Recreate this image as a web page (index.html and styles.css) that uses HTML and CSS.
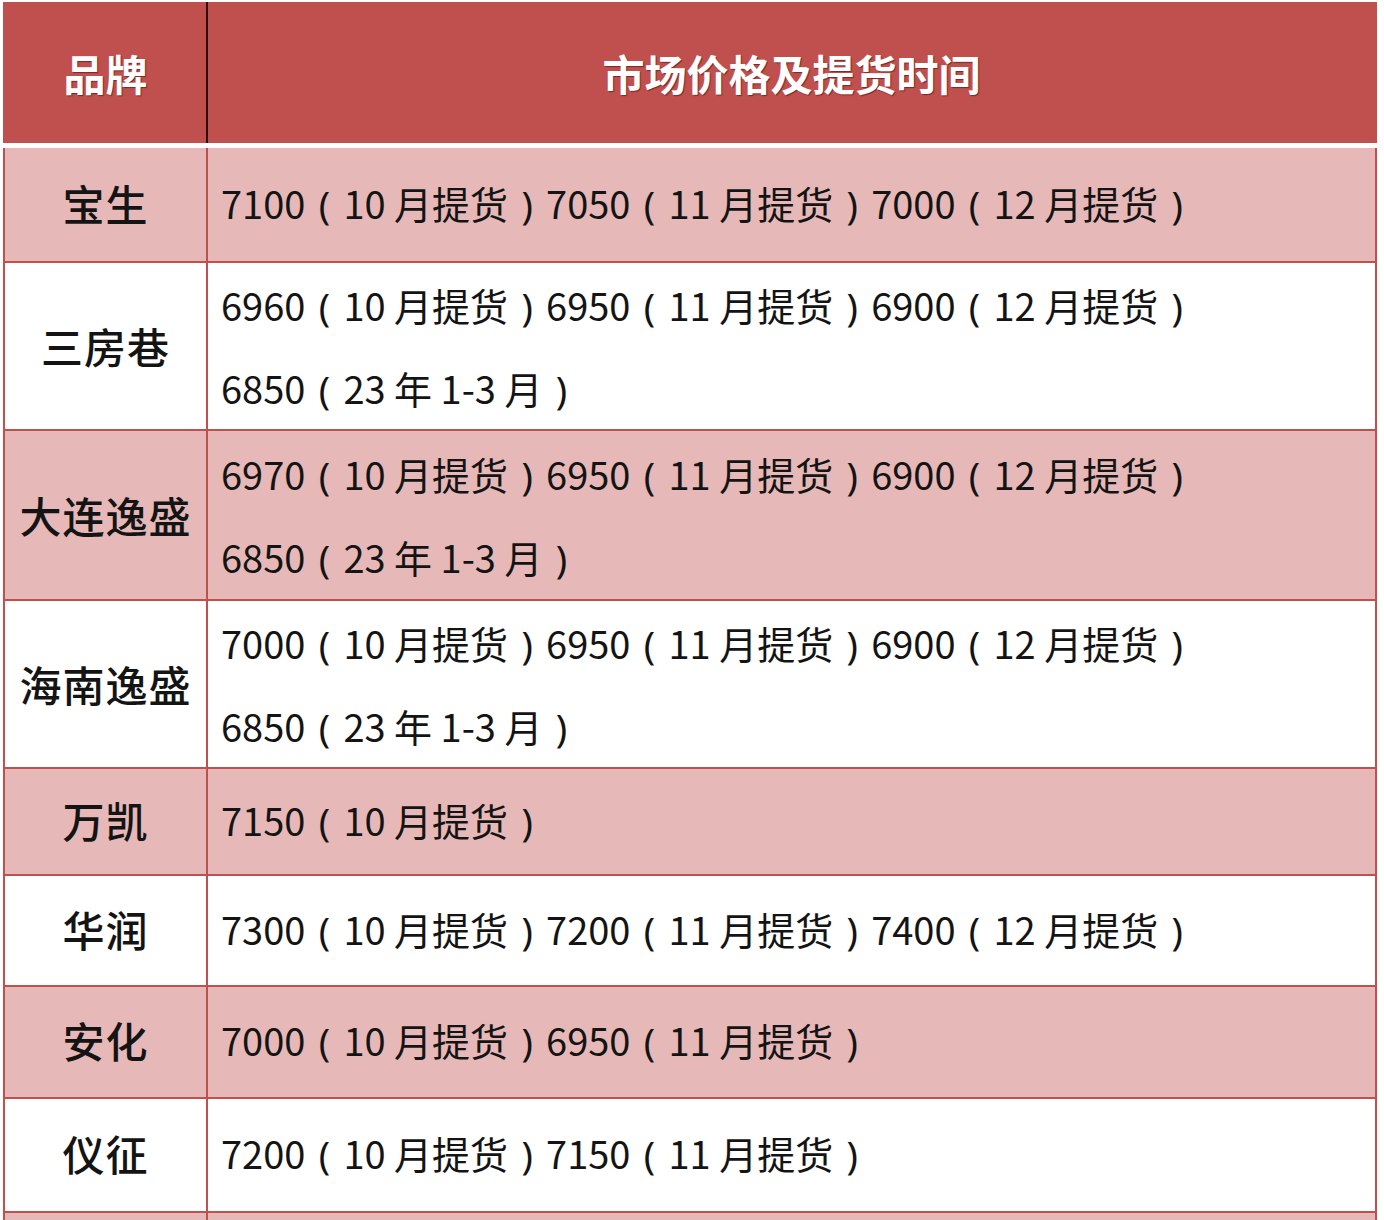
FILE: index.html
```html
<!DOCTYPE html>
<html lang="zh-CN">
<head>
<meta charset="utf-8">
<title>品牌 市场价格及提货时间</title>
<link rel="stylesheet" href="styles.css">
</head>
<body>
<div class="wrap">
<table class="price-table">
  <thead>
    <tr>
      <th class="brand-h">品牌</th>
      <th class="price-h">市场价格及提货时间</th>
    </tr>
  </thead>
  <tbody>
    <tr class="pink single r1">
      <td class="brand">宝生</td>
      <td class="price">7100<span class="p">(</span>10 月提货<span class="p">)</span>7050<span class="p">(</span>11 月提货<span class="p">)</span>7000<span class="p">(</span>12 月提货<span class="p">)</span></td>
    </tr>
    <tr class="white double r2">
      <td class="brand">三房巷</td>
      <td class="price">6960<span class="p">(</span>10 月提货<span class="p">)</span>6950<span class="p">(</span>11 月提货<span class="p">)</span>6900<span class="p">(</span>12 月提货<span class="p">)</span><br>6850<span class="p">(</span>23 年 1-3 月<span class="p">)</span></td>
    </tr>
    <tr class="pink double r3">
      <td class="brand">大连逸盛</td>
      <td class="price">6970<span class="p">(</span>10 月提货<span class="p">)</span>6950<span class="p">(</span>11 月提货<span class="p">)</span>6900<span class="p">(</span>12 月提货<span class="p">)</span><br>6850<span class="p">(</span>23 年 1-3 月<span class="p">)</span></td>
    </tr>
    <tr class="white double r4">
      <td class="brand">海南逸盛</td>
      <td class="price">7000<span class="p">(</span>10 月提货<span class="p">)</span>6950<span class="p">(</span>11 月提货<span class="p">)</span>6900<span class="p">(</span>12 月提货<span class="p">)</span><br>6850<span class="p">(</span>23 年 1-3 月<span class="p">)</span></td>
    </tr>
    <tr class="pink single r5">
      <td class="brand">万凯</td>
      <td class="price">7150<span class="p">(</span>10 月提货<span class="p">)</span></td>
    </tr>
    <tr class="white single r6">
      <td class="brand">华润</td>
      <td class="price">7300<span class="p">(</span>10 月提货<span class="p">)</span>7200<span class="p">(</span>11 月提货<span class="p">)</span>7400<span class="p">(</span>12 月提货<span class="p">)</span></td>
    </tr>
    <tr class="pink single r7">
      <td class="brand">安化</td>
      <td class="price">7000<span class="p">(</span>10 月提货<span class="p">)</span>6950<span class="p">(</span>11 月提货<span class="p">)</span></td>
    </tr>
    <tr class="white single r8">
      <td class="brand">仪征</td>
      <td class="price">7200<span class="p">(</span>10 月提货<span class="p">)</span>7150<span class="p">(</span>11 月提货<span class="p">)</span></td>
    </tr>
    <tr class="pink single r9">
      <td class="brand"></td>
      <td class="price"></td>
    </tr>
  </tbody>
</table>
</div>
</body>
</html>
```
FILE: styles.css
```css
html, body {
  margin: 0;
  padding: 0;
  background: #ffffff;
}
body {
  height: 1220px;
  overflow: hidden;
  font-family: "Noto Sans CJK SC", "Noto Sans", sans-serif;
  color: #141414;
}
.wrap {
  padding: 2px 7px 0 3px;
}
.price-table {
  width: 1374px;
  border-collapse: collapse;
  table-layout: fixed;
}
.price-table th {
  background: #c0504d;
  color: #ffffff;
  font-size: 42px;
  font-weight: 700;
  height: 141px;
  padding: 0;
  text-shadow: 1px 1px 1px rgba(60, 10, 10, 0.55);
  border-bottom: 5px solid #ffffff;
}
.brand-h {
  width: 201px;
  border-right: 2px solid #2a1010;
  border-left: 2px solid #c0504d;
}
.price-h {
  border-right: 2px solid #c0504d;
}
.price-table td {
  padding: 0;
  border-bottom: 2px solid #c0504d;
  vertical-align: middle;
}
.single td { padding-bottom: 4px; }
.pink td { background: #e6b9b8; }
.white td { background: #ffffff; }
.brand {
  text-align: center;
  font-size: 42px;
  font-weight: 500;
  border-left: 2px solid #c0504d;
  border-right: 2px solid #c0504d;
  letter-spacing: 1px;
}
.price {
  font-size: 38px;
  line-height: 83px;
  padding-left: 13px !important;
  border-right: 2px solid #c0504d;
  white-space: nowrap;
}
.p {
  display: inline-block;
  width: 38px;
  text-align: center;
  font-family: "Noto Sans", "Noto Sans CJK SC", sans-serif;
  font-size: 38px;
  line-height: 1;
}
.r1 { height: 116px; }
.r2 { height: 168px; }
.r3 { height: 170px; }
.r4 { height: 168px; }
.r5 { height: 107px; }
.r6 { height: 111px; }
.r7 { height: 112px; }
.r8 { height: 114px; }
.r9 { height: 60px; }
```
